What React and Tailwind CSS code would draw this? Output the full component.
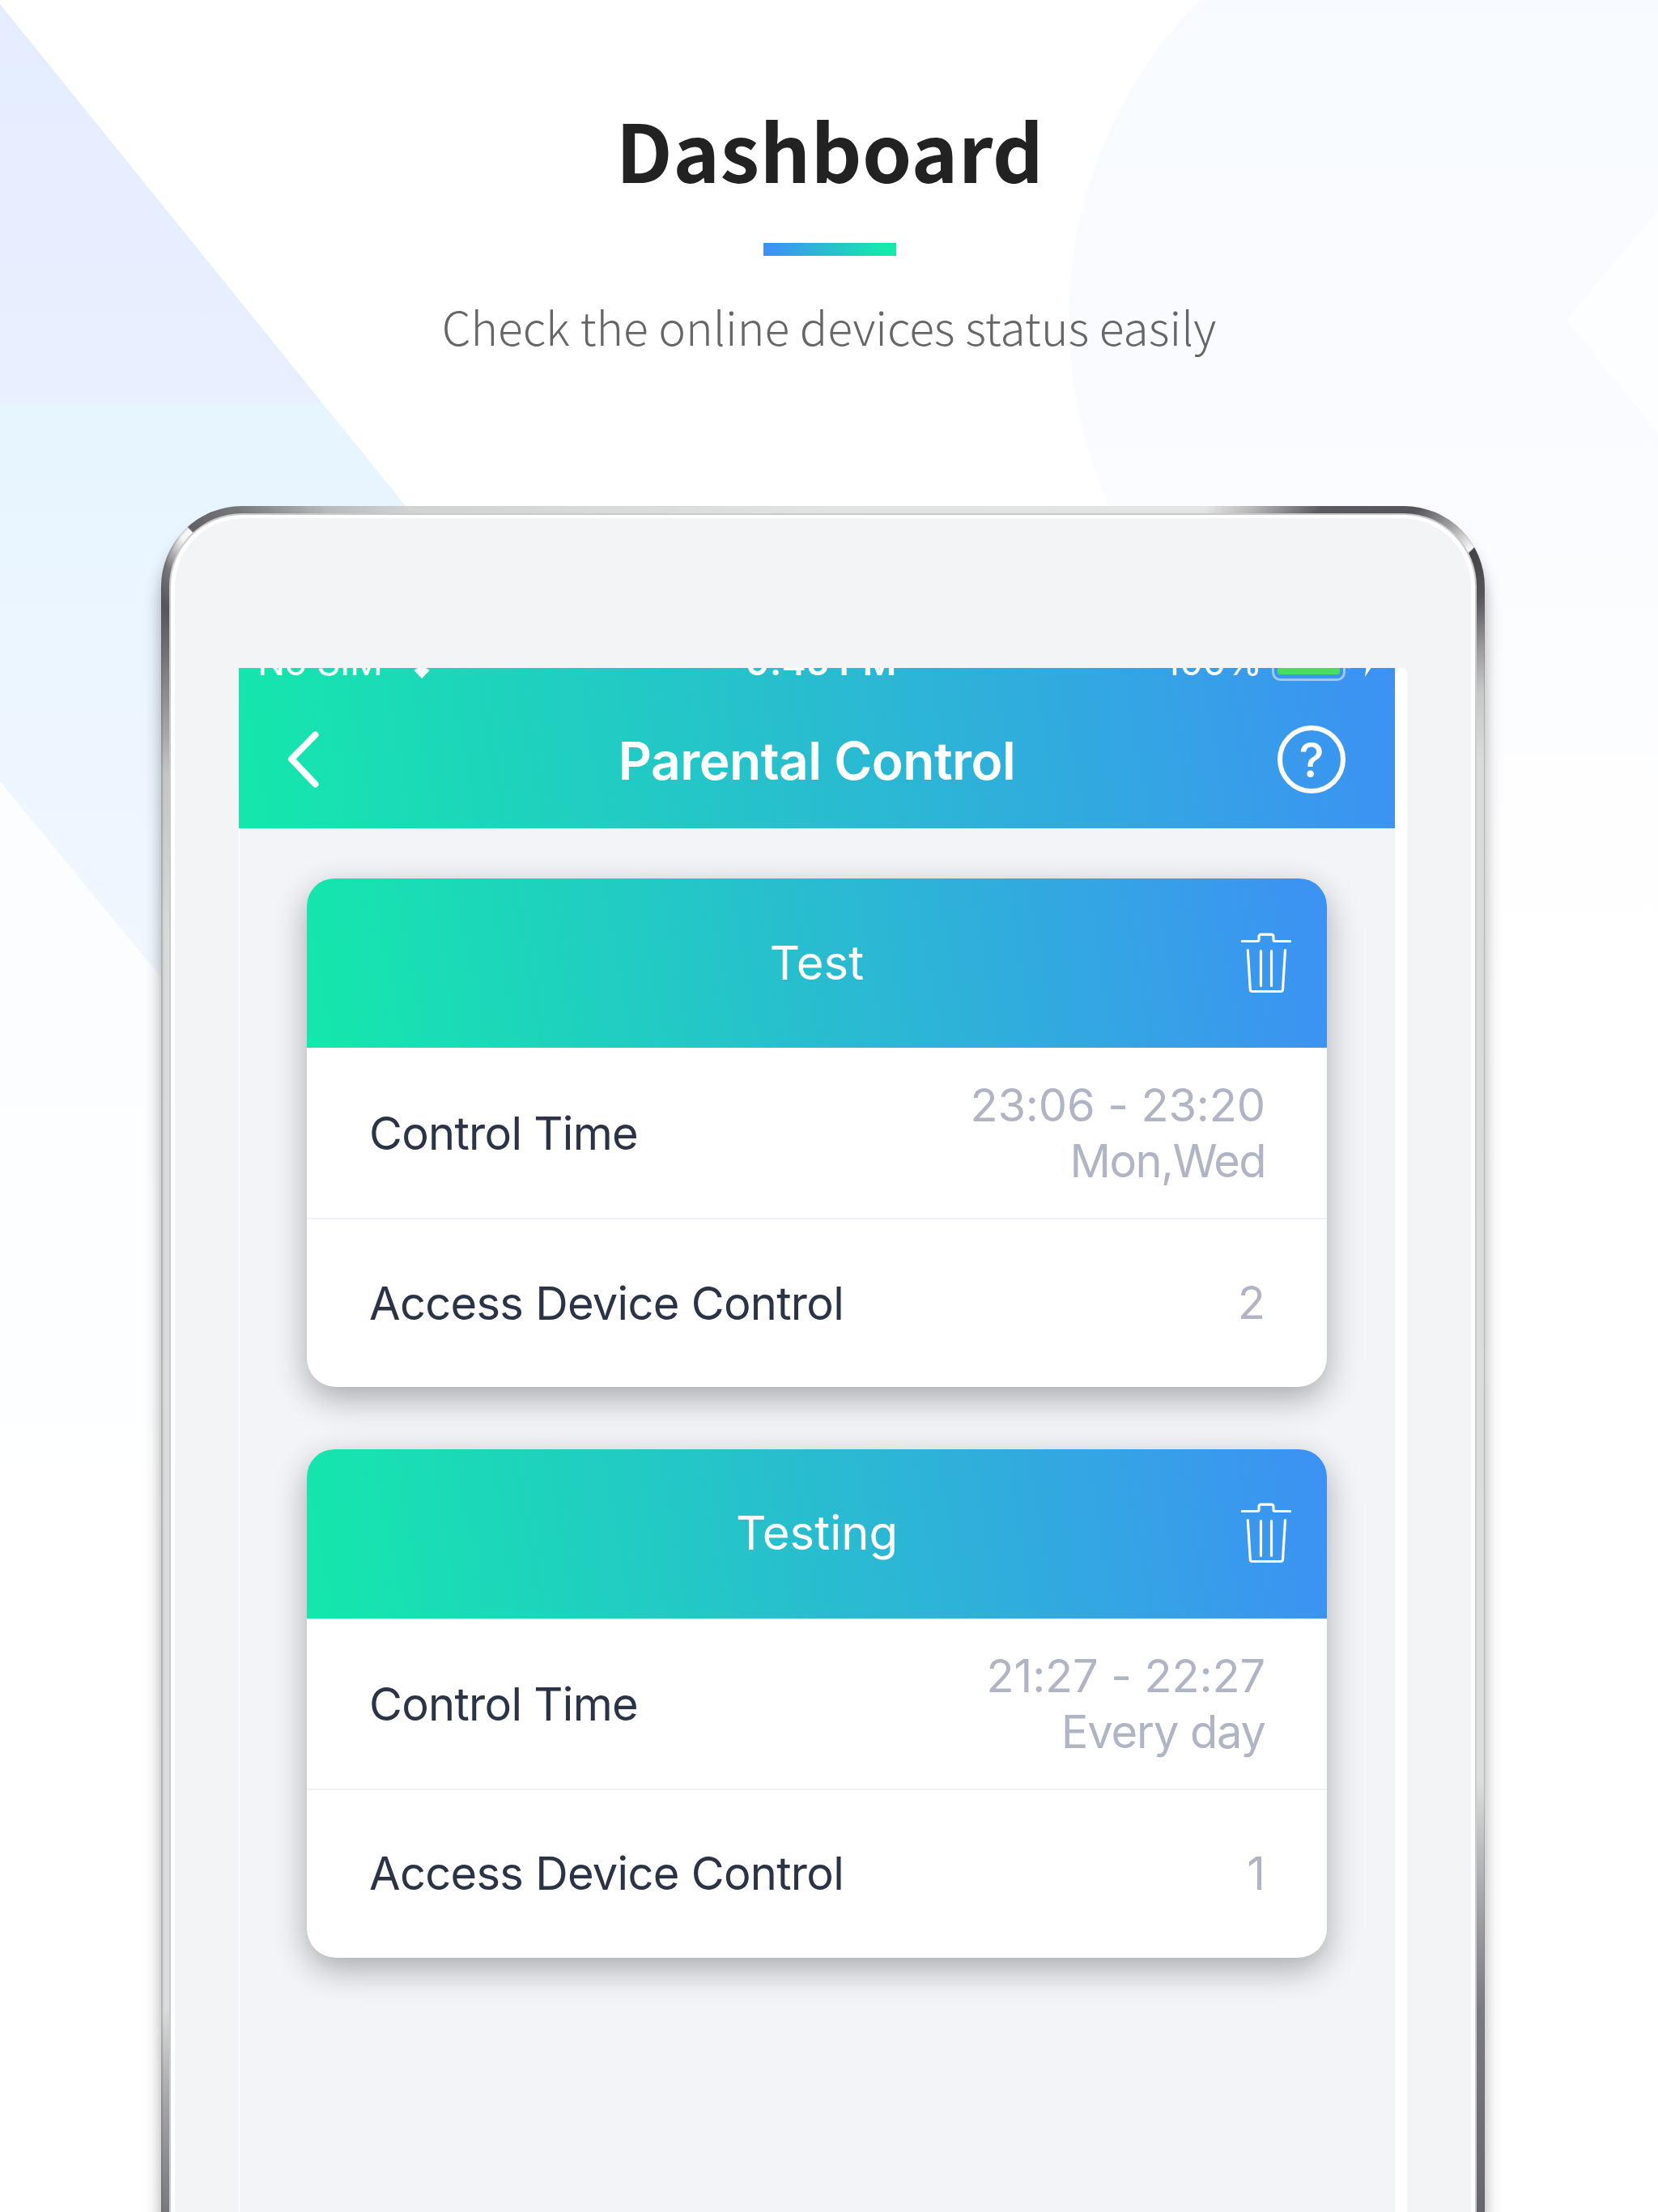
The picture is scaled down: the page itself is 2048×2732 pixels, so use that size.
import React from "react";

const profiles = [
  { name: "Test", time: "23:06 - 23:20", days: "Mon,Wed", daysTrack: "tracking-[-1.6px]", devices: "2" },
  { name: "Testing", time: "21:27 - 22:27", days: "Every day", daysTrack: "tracking-[-1.1px]", devices: "1" },
];

function Backdrop() {
  return (
    <svg className="absolute inset-0" width="2048" height="2732" viewBox="0 0 2048 2732" fill="none" aria-hidden="true">
      <defs>
        <linearGradient id="band" gradientUnits="userSpaceOnUse" x1="0" y1="0" x2="0" y2="1220">
          <stop offset="0" stopColor="#e3edff" />
          <stop offset="0.13" stopColor="#e6eeff" />
          <stop offset="0.4" stopColor="#e9efff" />
          <stop offset="0.412" stopColor="#e6f5fe" />
          <stop offset="0.6" stopColor="#eaf5ff" />
          <stop offset="1" stopColor="#f1f7ff" />
        </linearGradient>
        <linearGradient id="fade" gradientUnits="userSpaceOnUse" x1="0" y1="965" x2="0" y2="1850">
          <stop offset="0" stopColor="#fbfdff" />
          <stop offset="0.8" stopColor="#fcfeff" />
          <stop offset="1" stopColor="#ffffff" />
        </linearGradient>
        <linearGradient id="disc" gradientUnits="userSpaceOnUse" x1="0" y1="0" x2="0" y2="900">
          <stop offset="0" stopColor="#f7faff" />
          <stop offset="0.22" stopColor="#f8fbff" />
          <stop offset="0.24" stopColor="#f9fbff" />
          <stop offset="0.7" stopColor="#fbfcff" />
          <stop offset="1" stopColor="#fcfdff" />
        </linearGradient>
        <linearGradient id="haze" gradientUnits="userSpaceOnUse" x1="0" y1="600" x2="0" y2="1250">
          <stop offset="0" stopColor="#fbfcff" />
          <stop offset="1" stopColor="#ffffff" />
        </linearGradient>
      </defs>
      <path d="M0 965 L520 1600 V1850 H0Z" fill="url(#fade)" />
      <path d="M0 5 L501 625 V1575 L0 965Z" fill="url(#band)" />
      <path d="M1700 600H2048V1250H1700Z" fill="url(#haze)" />
      <path d="M1482 0 A560 560 0 0 0 1370 625 H2048 V0Z" fill="url(#disc)" />
      <path d="M1935 395 L2048 260 V535Z" fill="#fdfeff" />
    </svg>
  );
}

function TrashIcon() {
  return (
    <svg width="62" height="76" viewBox="0 0 62 76" fill="none" stroke="#fff" strokeWidth="3.2" strokeLinecap="round" strokeLinejoin="round">
      <path d="M1.5 10.5H20c1.6 0 2-.6 2-2V5.2c0-2 1-3 3-3h12c2 0 3 1 3 3v3.3c0 1.4.4 2 2 2h18.500" />
      <path d="M8.300 21.500l3 48.500c.1 1.700 1 2.500 2.600 2.500h35c1.600 0 2.500-.8 2.600-2.500l3-48.500" />
      <path d="M24.500 22.500V65.500M37.500 22.500V65.500" />
    </svg>
  );
}

function StatusBar() {
  return (
    <div className="flex h-[31px] flex-col justify-end overflow-hidden">
      <div className="grid h-[76px] shrink-0 grid-cols-[1fr_auto_1fr] items-center pb-px text-[45px] leading-[76px] text-white">
        <div className="flex items-center pl-[23px]">
          <span className="tracking-[-0.1px]">No SIM</span>
          <svg className="ml-[18px]" width="60" height="44" viewBox="0 0 60 44" fill="none" stroke="#fff" strokeWidth="7">
            <path d="M3 16a39 39 0 0 1 54 0M12 26a26 26 0 0 1 36 0" />
            <path d="M30 42l-9.500-10a14 14 0 0 1 19 0Z" fill="#fff" stroke="none" />
          </svg>
        </div>
        <span className="pl-[11px] text-center font-semibold tracking-[0.400px]">9:45 PM</span>
        <div className="flex items-center justify-end pr-[20px]">
          <span className="tracking-[0.300px]">100%</span>
          <svg className="ml-[12px]" width="132" height="46" viewBox="0 0 132 46" fill="none">
            <rect x="1.500" y="2" width="88" height="42.500" rx="9" stroke="#9cc8f7" strokeWidth="3" />
            <rect x="7" y="8" width="77" height="30" rx="3" fill="#4cd964" />
            <path d="M94 15q8 1 8 8t-8 8Z" fill="#9cc8f7" />
            <path d="M127 4L108 26h9l-2 15 15-22h-8Z" fill="#fff" />
          </svg>
        </div>
      </div>
    </div>
  );
}

function NavBar() {
  return (
    <div className="grid h-[167px] grid-cols-[1fr_auto_1fr] items-center text-white">
      <svg className="mb-[4px] ml-[60px]" width="40" height="70" viewBox="0 0 40 70" fill="none" stroke="#fff" strokeWidth="8" strokeLinecap="round" strokeLinejoin="round">
        <path d="M34.500 4.500L5 34.500l29.500 31" />
      </svg>
      <h2 className="text-[64px] leading-none font-semibold tracking-[-0.500px]">Parental Control</h2>
      <div className="mr-[61px] mb-[3px] flex size-[84px] items-center justify-center justify-self-end rounded-full border-[6px] border-white">
        <span className="text-[59px] leading-none font-medium">?</span>
      </div>
    </div>
  );
}

function Row({ label, children, divided }) {
  return (
    <div className={divided ? "flex h-[212px] items-center justify-between border-b-2 border-[#f1f1f6] pt-[2px] pr-[76px] pl-[77px]" : "flex h-[207px] items-center justify-between pr-[76px] pl-[77px]"}>
      <span className="text-[56px] leading-none tracking-[-0.700px] text-[#2b3347]">{label}</span>
      <div className="text-right text-[56px] leading-[69px] text-[#b0b5c5]">{children}</div>
    </div>
  );
}

function ProfileCard({ profile }) {
  return (
    <section className="rounded-[36px] bg-white shadow-[0_14px_40px_rgba(0,0,0,0.31)]">
      <div className="grid h-[209px] grid-cols-[1fr_auto_1fr] items-center rounded-t-[34px] bg-[linear-gradient(80deg,#14e8ab,#3d91f4)]">
        <h3 className="col-start-2 mb-[2px] text-[58px] leading-none text-white">{profile.name}</h3>
        <div className="mr-[44px] justify-self-end">
          <TrashIcon />
        </div>
      </div>
      <Row label="Control Time" divided>
        <div className="tracking-[-0.150px]">{profile.time}</div>
        <div className={profile.daysTrack}>{profile.days}</div>
      </Row>
      <Row label="Access Device Control">{profile.devices}</Row>
    </section>
  );
}

export default function App() {
  return (
    <main className="relative isolate flex h-[2732px] w-[2048px] flex-col overflow-hidden bg-white font-['Inter',sans-serif]">
      <Backdrop />
      <header className="relative flex h-[625px] shrink-0 flex-col items-center font-['Noto_Sans_CJK_SC',sans-serif]">
        <h1 className="mt-[111px] ml-[2px] h-[144px] text-[98px] leading-[144px] font-bold tracking-[0.400px] text-[#222]">Dashboard</h1>
        <div className="mt-[45px] ml-[2px] h-[16px] w-[164px] bg-[linear-gradient(95deg,#3d91f4_5%,#14e8ab_90%)]" />
        <p className="mt-[42px] text-[57px] leading-[88px] font-light whitespace-nowrap text-[#666]">Check the online devices status easily</p>
      </header>

      <div className="relative ml-[199px] h-[2200px] w-[1635px] shrink-0 rounded-t-[100px] bg-[conic-gradient(from_0deg_at_818px_818px,#e0e3e2_0deg,#e3e5e4_30deg,#b8b8ba_33deg,#5c5b61_37deg,#55545b_42deg,#a0a0a3_44.3deg,#fafafa_46.3deg,#434247_46.4deg,#55555a_49deg,#98989b_51.500deg,#c6c7c7_54deg,#d9dbda_58deg,#dcdedd_133deg,#7b7b82_142deg,#66666c_148deg,#77757a_212deg,#aaa8ab_215.300deg,#dadddb_218deg,#d8dad9_290deg,#c4c5c5_301deg,#919193_305.500deg,#56555b_310.500deg,#77777b_312.500deg,#f5f5f5_314.500deg,#fafafa_315.200deg,#626166_315.300deg,#77777a_318.300deg,#b8b9ba_323deg,#d2d4d4_328deg,#e0e3e2_360deg)] px-[10px] pt-[9px] shadow-[0_20px_20px_rgba(0,0,0,0.34),inset_3px_0_2px_-1px_rgba(90,90,95,0.35),inset_-2px_0_1px_-1px_rgba(90,90,95,0.3)]">
        <div className="h-full rounded-t-[90px] border-x-2 border-t-2 border-[#c8cacb] bg-white px-[5px] pt-[4px]">
          <div className="h-full rounded-t-[85px] bg-[#f3f4f6] pt-[185px] pl-[79px]">
            <div className="flex h-full w-[1443px] rounded-tr-[6px] bg-white">
              <div className="h-full w-[1428px] border-l border-white bg-[#f2f4f8]">
                <div className="-ml-px bg-[linear-gradient(80deg,#14e8ab,#3d91f4)]">
                  <StatusBar />
                  <NavBar />
                </div>
                <div className="flex flex-col gap-[76.500px] pt-[62px] pr-[84px] pl-[83px]">
                  {profiles.map((p) => (
                    <ProfileCard key={p.name} profile={p} />
                  ))}
                </div>
              </div>
            </div>
          </div>
        </div>
      </div>
    </main>
  );
}
